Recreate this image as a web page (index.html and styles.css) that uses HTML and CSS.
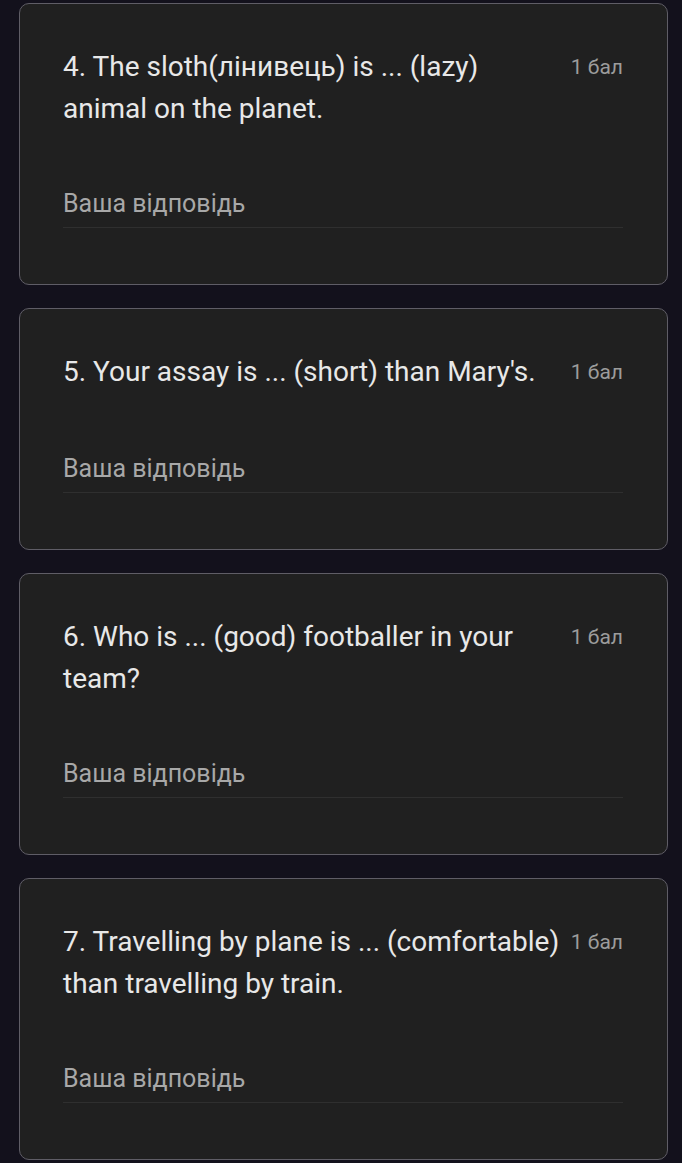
FILE: index.html
```html
<!DOCTYPE html>
<html lang="uk">
<head>
<meta charset="utf-8">
<title>Тест</title>
<link rel="stylesheet" href="styles.css">
</head>
<body>
<main class="list">
  <section class="card">
    <div class="head">
      <div class="question">4. The sloth(лінивець) is ... (lazy) animal on the planet.</div>
      <div class="points">1 бал</div>
    </div>
    <div class="answer">Ваша відповідь</div>
  </section>
  <section class="card">
    <div class="head">
      <div class="question">5. Your assay is ... (short) than Mary's.</div>
      <div class="points">1 бал</div>
    </div>
    <div class="answer">Ваша відповідь</div>
  </section>
  <section class="card">
    <div class="head">
      <div class="question">6. Who is ... (good) footballer in your team?</div>
      <div class="points">1 бал</div>
    </div>
    <div class="answer">Ваша відповідь</div>
  </section>
  <section class="card">
    <div class="head">
      <div class="question">7. Travelling by plane is ... (comfortable) than travelling by train.</div>
      <div class="points">1 бал</div>
    </div>
    <div class="answer">Ваша відповідь</div>
  </section>
</main>
</body>
</html>
```

FILE: styles.css
```css
html, body {
  margin: 0;
  padding: 0;
  background: #13111c;
}
body {
  font-family: Roboto, "Noto Sans", sans-serif;
}
.list {
  display: flex;
  flex-direction: column;
  gap: 23px;
  padding: 3px 14px 0 19px;
}
.card {
  background: #202020;
  border: 1px solid #5f5d66;
  border-radius: 10px;
  padding: 42px 44px 56px 43px;
}
.head {
  display: flex;
  align-items: flex-start;
  gap: 8px;
  min-height: 44px;
}
.question {
  flex: 1;
  font-size: 28px;
  line-height: 42px;
  color: #e8e8e8;
}
.points {
  font-size: 21px;
  line-height: 42px;
  color: #9c9c9c;
  white-space: nowrap;
}
.answer {
  margin-top: 59px;
  font-size: 25px;
  line-height: 30px;
  color: #a8a8a8;
  padding-bottom: 8px;
  border-bottom: 1px solid #2f2f2f;
}
```
